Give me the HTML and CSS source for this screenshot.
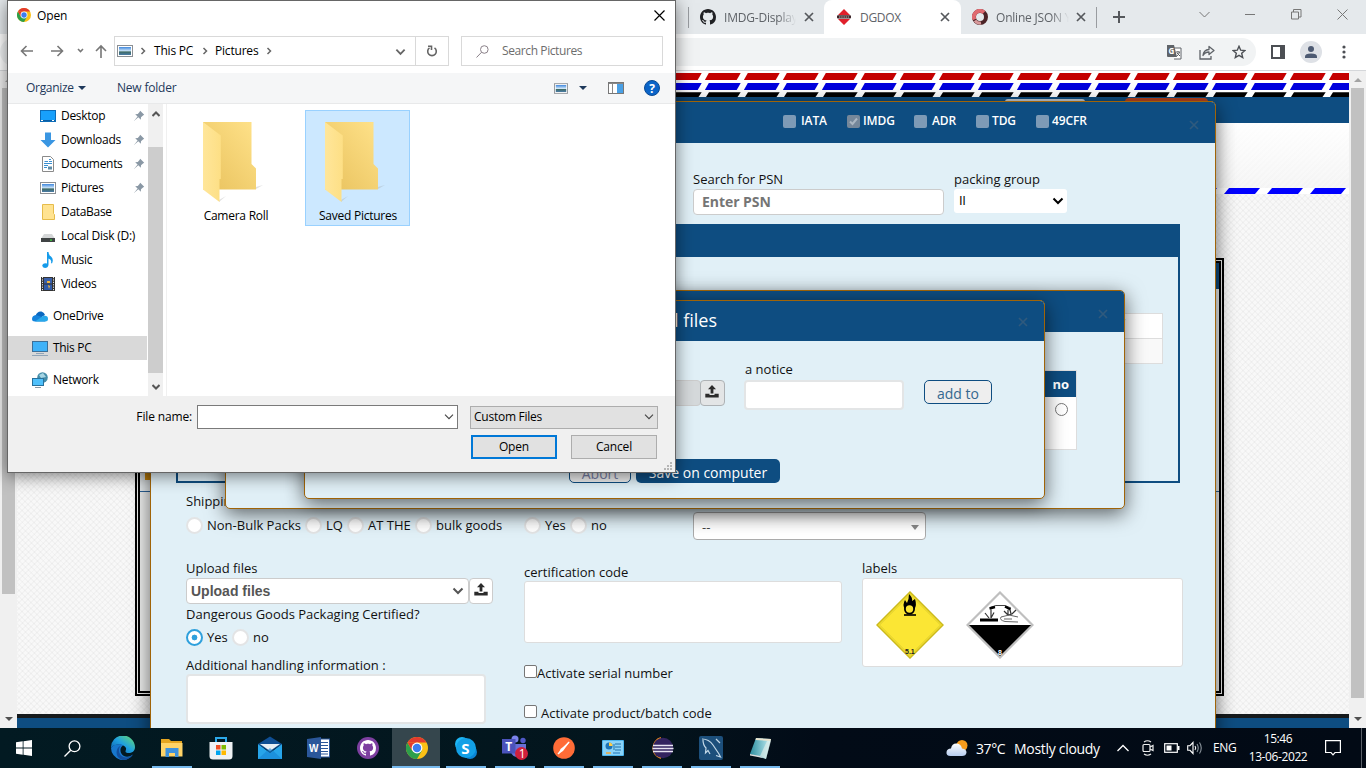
FILE: index.html
```html
<!DOCTYPE html>
<html lang="en">
<head>
<meta charset="utf-8">
<title>DGDOX</title>
<link rel="stylesheet" href="styles.css">
</head>
<body>
<svg class="defs" width="0" height="0">
  <defs>
    <linearGradient id="fback" x1="0" x2="1" y1="1" y2="0"><stop offset="0" stop-color="#e8c15c"/><stop offset="1" stop-color="#ffe28a"/></linearGradient>
    <linearGradient id="ffront" x1="0" x2="1"><stop offset="0" stop-color="#ffe69a"/><stop offset="1" stop-color="#fddf85"/></linearGradient>
    <linearGradient id="edgeg" x1="0" x2="1" y1="1" y2="0"><stop offset="0" stop-color="#0c59a4"/><stop offset=".5" stop-color="#1e9fe0"/><stop offset="1" stop-color="#6ae06a"/></linearGradient>
    <linearGradient id="sky" x1="0" x2="0" y1="0" y2="1"><stop offset="0" stop-color="#3f87dd"/><stop offset=".5" stop-color="#cfe6f8"/><stop offset=".6" stop-color="#3e6a62"/><stop offset="1" stop-color="#4a7ca8"/></linearGradient>
    <linearGradient id="note" x1="0" x2="1"><stop offset="0" stop-color="#2c8d9f"/><stop offset="1" stop-color="#c4eff4"/></linearGradient>
    <linearGradient id="cloudg" x1="0" x2="0" y1="0" y2="1"><stop offset="0" stop-color="#fff"/><stop offset="1" stop-color="#b7cdf0"/></linearGradient>
    <symbol id="chrome" viewBox="0 0 24 24"><circle cx="12" cy="12" r="12" fill="#fbc116"/><path d="M1.6 6A12 12 0 0 1 22.4 6H12z" fill="#e33b2e"/><path d="M1.6 6A12 12 0 0 0 12 24L17.2 15 12 12 6.8 15z" fill="#2d9f4b"/><path d="M1.6 6 6.8 15 12 6z" fill="#e33b2e"/><circle cx="12" cy="12" r="5.9" fill="#fff"/><circle cx="12" cy="12" r="4.6" fill="#3c7df0"/></symbol>
    <symbol id="github" viewBox="0 0 16 16"><path d="M8 0C3.58 0 0 3.58 0 8c0 3.54 2.29 6.53 5.47 7.59.4.07.55-.17.55-.38 0-.19-.01-.82-.01-1.49-2.01.37-2.53-.49-2.69-.94-.09-.23-.48-.94-.82-1.13-.28-.15-.68-.52-.01-.53.63-.01 1.08.58 1.23.82.72 1.21 1.87.87 2.33.66.07-.52.28-.87.51-1.07-1.78-.2-3.64-.89-3.64-3.95 0-.87.31-1.59.82-2.15-.08-.2-.36-1.02.08-2.12 0 0 .67-.21 2.2.82.64-.18 1.32-.27 2-.27s1.36.09 2 .27c1.53-1.04 2.2-.82 2.2-.82.44 1.1.16 1.92.08 2.12.51.56.82 1.27.82 2.15 0 3.07-1.87 3.75-3.65 3.95.29.25.54.73.54 1.48 0 1.07-.01 1.93-.01 2.2 0 .21.15.46.55.38A8.01 8.01 0 0 0 16 8c0-4.42-3.58-8-8-8z"/></symbol>
    <symbol id="pic" viewBox="0 0 16 12"><rect x=".5" y=".5" width="15" height="11" fill="#fff" stroke="#8b8f94"/><rect x="2" y="2" width="12" height="8" fill="url(#sky)"/></symbol>
    <symbol id="pin" viewBox="0 0 12 12"><path d="M7.2.8 11.2 4.8 10 5.6 8 7.3 7.8 9.8 5.3 7.3 1 11 4.6 6.6 2.2 4.3 4.8 4 6.5 2z" fill="#8a98a5"/></symbol>
    <symbol id="upload" viewBox="0 0 14 13"><path d="M7 0 11 4.3H8.4V8.5H5.6V4.3H3zM.3 8.8H4.5V10H9.500V8.800H13.700V12.500H.3z" fill="#2b2b2b"/></symbol>
    <symbol id="folder" viewBox="0 0 62 84"><path d="M54 67 61 65 54 69zM17 80 24 76 17 82z" fill="#9a9a9a" opacity=".3"/><path d="M1 2H49.500V44L54 48.500V69.500H1z" fill="url(#fback)"/><path d="M1 2 18.800 15.500V59H17.500V82L1 69.500z" fill="url(#ffront)"/></symbol>
    <symbol id="chev" viewBox="0 0 12 8"><path d="M1.500 1.500 6 6 10.500 1.500" fill="none" stroke="currentColor" stroke-width="2"/></symbol>
    <symbol id="cross" viewBox="0 0 10 10"><path d="M1 1 9 9M9 1 1 9" stroke="currentColor" stroke-width="1.700"/></symbol>
  </defs>
</svg>

<div class="browser">
  <div class="tabs">
    <div class="tab tab-left"><svg width="16" height="16" fill="#202124"><use href="#github"/></svg><span class="tab-text fade">IMDG-Display</span><svg class="tab-x" width="10" height="10"><use href="#cross"/></svg></div>
    <div class="tab tab-on"><svg width="14" height="16" viewBox="0 0 14 16"><path d="M7 0 13 6H1zM1 10H13L7 16z" fill="#e0202b"/><rect y="6.200" width="14" height="3.400" rx="1" fill="#3a2226"/><path d="M2 8H12" stroke="#c9b5b5" stroke-dasharray="1.500 .7"/></svg><span class="tab-text">DGDOX</span><svg class="tab-x" width="10" height="10"><use href="#cross"/></svg></div>
    <div class="tab tab-right"><svg width="16" height="16" viewBox="0 0 16 16" fill="none"><circle cx="8" cy="8" r="6" stroke="#4c2427" stroke-width="4"/><path d="M2.500 10.500A6 6 0 0 1 12 3.500" stroke="#e06a70" stroke-width="4"/><path d="M3 11.500A6 6 0 0 0 9 14" stroke="#d99a9c" stroke-width="3"/></svg><span class="tab-text fade">Online JSON Y</span><svg class="tab-x" width="10" height="10"><use href="#cross"/></svg></div>
    <svg class="plus" width="12" height="12" viewBox="0 0 12 12"><path d="M6 0V12M0 6H12" stroke="#55585c" stroke-width="2"/></svg>
    <div class="wincontrols">
      <svg width="11" height="11" viewBox="0 0 11 11" fill="none" stroke="#777"><path d="M.5 3 5.500 8 10.500 3"/></svg>
      <svg width="11" height="11" viewBox="0 0 11 11" stroke="#777"><path d="M0 5.500H10"/></svg>
      <svg width="11" height="11" viewBox="0 0 11 11" fill="none" stroke="#777"><path d="M.5 3H7.500V10H.5zM2.500 3V.5H10V8H8"/></svg>
      <svg width="11" height="11" viewBox="0 0 11 11" stroke="#777"><path d="M.5.5 10.500 10.500M10.500.5.5 10.500"/></svg>
    </div>
  </div>
  <div class="toolbar">
    <div class="omnibox">
      <svg width="15" height="15" viewBox="0 0 15 15"><path d="M6 3H14V14H7" fill="#fff" stroke="#5f6368"/><path d="M0 0H7L10 12H1Q0 12 0 11z" fill="#5f6368"/><text x="1.500" y="9" class="gletter">G</text><path d="M9 7H13M11 6V7M12.500 7Q12 10 9.800 11M10 8 13 11" stroke="#5f6368" fill="none"/></svg>
      <svg width="16" height="15" viewBox="0 0 16 15" fill="none" stroke="#5f6368" stroke-width="1.300"><path d="M1 5V14H12V11"/><path d="M4 10.500Q4.500 5 10 4.500V1.500L15 5.500 10 9.500V7Q6 7 4 10.500z" stroke-linejoin="round"/></svg>
      <svg width="14" height="14" viewBox="0 0 14 14" fill="none" stroke="#4c4f54" stroke-width="1.400"><path d="M7 1.300 8.700 5.200 12.900 5.600 9.700 8.300 10.700 12.500 7 10.300 3.300 12.500 4.300 8.300 1.100 5.600 5.300 5.200z"/></svg>
    </div>
    <svg class="side" width="14" height="14" viewBox="0 0 14 14"><path d="M1 1H13V13H1z" fill="#fff" stroke="#4c4f54" stroke-width="2"/><path d="M9 0H14V14H9z" fill="#4c4f54"/></svg>
    <svg class="avatar" width="22" height="22" viewBox="0 0 22 22"><circle cx="11" cy="11" r="11" fill="#dee1e6"/><circle cx="11" cy="8" r="3" fill="#4d5a72"/><path d="M5 17V15.500Q5 12.500 11 12.500T17 15.500V17z" fill="#4d5a72"/></svg>
    <svg class="dots" width="4" height="14" fill="#4c4f54"><circle cx="2" cy="2" r="1.600"/><circle cx="2" cy="7" r="1.600"/><circle cx="2" cy="12" r="1.600"/></svg>
  </div>
  <div class="viewport">
    <div class="scroll scroll-l"><i class="up"></i><div class="thumb"></div><i class="down"></i></div>
    <div class="page">
      <svg class="stripes" width="1332" height="26">
        <defs><pattern id="st" width="39" height="26" patternUnits="userSpaceOnUse" x="25"><rect width="39" height="26" fill="#fff"/><path d="M-.2 9 3.800 2H35.700L31.700 9z" fill="#c40000"/><path d="M-.2 19 3.800 12H35.700L31.700 19z" fill="#00d"/><path d="M1 26 4 21.300H35.700L32.500 26z" fill="#000"/></pattern></defs>
        <rect width="1332" height="26" fill="url(#st)"/>
      </svg>
      <div class="navbar"><i class="nav-light"></i><i class="nav-red"></i></div>
      <div class="banner"></div>
      <svg class="stripes" width="1332" height="6">
        <defs><pattern id="sb" width="43" height="6" patternUnits="userSpaceOnUse" x="3"><rect width="43" height="6" fill="#fff"/><path d="M0 6 5 0H36L31 6z" fill="#00f"/></pattern></defs>
        <rect width="1332" height="6" fill="url(#sb)"/>
      </svg>
      <div class="canvas"><div class="frame"><div class="frame-head"></div><div class="frame-body"><i class="frame-tag"></i></div></div></div>
      <div class="foot"></div>
    </div>
    <div class="scroll scroll-r"><i class="up"></i><div class="thumb"></div><i class="down dark"></i></div>

    <div class="modal m1">
      <div class="mhead checks">
        <span class="ck w1"><i></i>IATA</span><span class="ck w2 tight"><i class="on"><svg width="13" height="13" viewBox="0 0 13 13"><path d="M3 6.500 5.500 9 10 3.500" fill="none" stroke="#aab6c2" stroke-width="2"/></svg></i>IMDG</span><span class="ck w3"><i></i>ADR</span><span class="ck w4 tight"><i></i>TDG</span><span class="ck tight"><i></i>49CFR</span>
        <svg class="mx" width="10" height="10"><use href="#cross"/></svg>
      </div>
      <div class="mbody">
        <div class="psn-row">
          <div><div class="lbl upl1">Search for PSN</div><div class="psn">Enter PSN</div></div>
          <div><div class="lbl upl1">packing group</div><div class="pg"><span>II</span><svg width="12" height="8"><use href="#chev"/></svg></div></div>
        </div>
        <div class="box"><div class="box-head"></div><div class="grid-table"><div class="gt-row">y</div><div class="gt-row alt"></div></div></div>
        <div class="ship">
          <div><div class="lbl upl1">Shipping</div><div class="radios"><span class="r ra"><i></i>Non-Bulk Packs</span><span class="r rb"><i></i>LQ</span><span class="r rc"><i></i>AT THE</span><span class="r"><i></i>bulk goods</span></div></div>
          <div class="radios"><span class="r rd"><i></i>Yes</span><span class="r"><i></i>no</span></div>
          <div class="dd"><span>--</span><i></i></div>
        </div>
        <div class="cols">
          <div>
            <div class="lbl">Upload files</div>
            <div class="upl"><div class="usel"><b>Upload files</b><svg width="12" height="8"><use href="#chev"/></svg></div><div class="ubtn"><svg width="14" height="13"><use href="#upload"/></svg></div></div>
            <div class="lbl">Dangerous Goods Packaging Certified?</div>
            <div class="radios"><span class="r rd"><i class="sel"></i>Yes</span><span class="r"><i></i>no</span></div>
            <div class="lbl add">Additional handling information :</div>
            <div class="ta1"></div>
          </div>
          <div class="c2">
            <div class="lbl">certification code</div>
            <div class="ta2"></div>
            <div class="cb"><i></i>Activate serial number</div>
            <div class="cb sp"><i></i>Activate product/batch code</div>
          </div>
          <div>
            <div class="lbl">labels</div>
            <div class="labels">
              <svg width="68" height="68" viewBox="0 0 68 68"><path d="M34 1 67 34 34 67 1 34z" fill="#fbe634" stroke="#cbb91c" stroke-width="1.500"/><path d="M34 3.500 64.500 34 34 64.500 3.500 34z" fill="none" stroke="#d3c32a" stroke-width=".7"/><path d="M33 3Q37 7 36 10L39 8Q41 14 38.500 18H29Q26 14 29 9L31 12Q33 8 33 3z" fill="#000"/><circle cx="33.500" cy="18" r="4.600" fill="#fbe634" stroke="#000" stroke-width="1.800"/><path d="M28 24H40" stroke="#000" stroke-width="1.600"/><text x="29" y="63" class="cls">5.1</text></svg>
              <svg width="68" height="68" viewBox="0 0 68 68"><path d="M34 1.500 66.500 34 34 66.500 1.500 34z" fill="#fff"/><path d="M2 34H66L34 66z" fill="#000"/><path d="M34 1.500 66.500 34 34 66.500 1.500 34z" fill="none" stroke="#bfbfbf" stroke-width="2.200"/><path d="M14 27.500H32V30.500H14z" fill="#000"/><path d="M24 16.500 30 14.500 39 14.500 45 17" fill="none" stroke="#444" stroke-width="1"/><path d="M23.500 17.500 29 16M39 15.500 44.500 18.500" stroke="#000" stroke-width="2.400"/><path d="M25 18.500V27M19 22 23 27M28 21.500 25 27M44 18.500 45 23M38 20 42 24 46 23 50 19M42 19V24" fill="none" stroke="#333" stroke-width="1.200"/><path d="M52 26 43 24 35 26Q33 29 39 30.500L52 31M38 28 46 28" fill="none" stroke="#666" stroke-width="1"/><text x="32" y="64" class="cls w">8</text></svg>
            </div>
          </div>
        </div>
      </div>
    </div>

    <div class="modal m2">
      <div class="mhead"><svg class="mx" width="10" height="10"><use href="#cross"/></svg></div>
      <div class="mbody m2b"><div class="yn"><div class="yn-h">no</div><div class="yn-c"><i></i></div></div></div>
    </div>

    <div class="modal m3">
      <div class="mhead title">Upload files<svg class="mx" width="10" height="10"><use href="#cross"/></svg></div>
      <div class="mbody m3b">
        <div class="frow">
          <div class="fgroup"><div class="fdis"></div><div class="fbtn"><svg width="14" height="13"><use href="#upload"/></svg></div></div>
          <div class="notice"><div class="lbl">a notice</div><div class="fin"></div></div>
          <div class="addto">add to</div>
        </div>
        <div class="fbtns"><div class="abort">Abort</div><div class="save">Save on computer</div></div>
      </div>
    </div>
  </div>
</div>

<div class="dialog">
  <div class="d-title"><svg width="14" height="14"><use href="#chrome"/></svg><span>Open</span><svg class="d-x" width="11" height="11" viewBox="0 0 11 11" stroke="#000"><path d="M.5.5 10.500 10.500M10.500.5.5 10.500" stroke-width="1.200"/></svg></div>
  <div class="d-nav">
    <svg class="arrows" width="88" height="14" viewBox="0 0 88 14" fill="none" stroke="#777" stroke-width="1.600"><path d="M13 7H1.500M6.500 2 1.500 7 6.500 12M31 7H42.500M37.500 2 42.500 7 37.500 12"/><path d="M58 5 60.500 7.500 63 5"/><path d="M81 14V2M76 7 81 2 86 7"/></svg>
    <div class="addr"><svg width="16" height="12"><use href="#pic"/></svg><svg class="sep" width="6" height="8" viewBox="0 0 6 8"><path d="M1.500 1 4.500 4 1.500 7" fill="none" stroke="#666" stroke-width="1.500"/></svg><span class="a1">This PC</span><svg class="sep" width="6" height="8" viewBox="0 0 6 8"><path d="M1.500 1 4.500 4 1.500 7" fill="none" stroke="#666" stroke-width="1.500"/></svg><span class="a2">Pictures</span><svg class="sep" width="6" height="8" viewBox="0 0 6 8"><path d="M1.500 1 4.500 4 1.500 7" fill="none" stroke="#666" stroke-width="1.500"/></svg><svg class="a-dd" width="11" height="8"><use href="#chev"/></svg></div>
    <div class="refresh"><svg width="12" height="12" viewBox="0 0 12 12" fill="none" stroke="#666" stroke-width="1.600"><path d="M8.500 2.800A4.300 4.300 0 1 1 3.500 2.800"/><path d="M2 1.200H5.500V5"/></svg></div>
    <div class="search"><svg width="13" height="13" viewBox="0 0 13 13" fill="none" stroke="#8a8088"><circle cx="8.300" cy="4.500" r="3.800"/><path d="M5.500 7.300.5 12.500"/></svg><span>Search Pictures</span></div>
  </div>
  <div class="d-tools"><span class="org">Organize</span><i class="tri"></i><span class="nf">New folder</span>
    <svg class="t1" width="14" height="11"><use href="#pic"/></svg><i class="tri"></i>
    <svg class="t2" width="16" height="12" viewBox="0 0 16 12"><rect x=".5" y=".5" width="15" height="11" fill="#fff" stroke="#777"/><path d="M1 1.500H15M4.500 2V11" stroke="#888"/><rect x="9" y="2" width="6" height="9" fill="#49a0e6"/></svg>
    <svg class="t3" width="16" height="16" viewBox="0 0 16 16"><circle cx="8" cy="8" r="7.500" fill="#0b64c8" stroke="#0a4a94"/><text x="5.200" y="12.500" class="q">?</text></svg>
  </div>
  <div class="d-main">
    <div class="side-list">
      <div class="it"><svg width="16" height="16" viewBox="0 0 16 16"><rect x=".5" y="2.500" width="15" height="11" fill="#18a0fb" stroke="#0c6cb8"/><path d="M1 12.500H15" stroke="#0c5ea3" /><path d="M1 12.500H3M12 12.500H14" stroke="#fff"/></svg><span>Desktop</span><svg class="pin" width="12" height="12"><use href="#pin"/></svg></div>
      <div class="it"><svg width="16" height="16" viewBox="0 0 16 16"><path d="M5 .5H11V8H15.500L8 15.500.5 8H5z" fill="#3a96e2"/></svg><span>Downloads</span><svg class="pin" width="12" height="12"><use href="#pin"/></svg></div>
      <div class="it"><svg width="16" height="16" viewBox="0 0 16 16"><path d="M2.500.5H10.500L13.500 3.500V15.500H2.500z" fill="#fff" stroke="#8a8a8a"/><path d="M4.500 5.500H8M9 3.500H11M9 5.500H12M4 7.500H12M4 9.500H8M4 11.500H7" stroke="#3b8fd0"/><path d="M8 10.500H12V13.500H8z" fill="#5d8ba6"/></svg><span>Documents</span><svg class="pin" width="12" height="12"><use href="#pin"/></svg></div>
      <div class="it"><svg width="16" height="12"><use href="#pic"/></svg><span>Pictures</span><svg class="pin" width="12" height="12"><use href="#pin"/></svg></div>
      <div class="it"><svg width="16" height="16" viewBox="0 0 16 16"><path d="M2.500.5H13.500V9.500L14.500 10.500V15.500H2.500z" fill="#ffe391" stroke="#e6bc4b"/></svg><span>DataBase</span></div>
      <div class="it"><svg width="16" height="16" viewBox="0 0 16 16"><path d="M4 6H12L14.500 10H1.500z" fill="#d5d7d8"/><rect x="1" y="10" width="14" height="4" fill="#3f4344"/><rect x="10" y="11.500" width="2" height="1.200" fill="#3fe23f"/></svg><span class="nar">Local Disk (D:)</span></div>
      <div class="it"><svg width="16" height="16" viewBox="0 0 16 16"><path d="M7 0H8.500Q8.500 3 11 4.500 14 7 12 11.500L11 11Q12 7.500 8.500 6.500V13Q8 16 5 16 2 15.500 2.300 13 3.500 10.500 7 11.500z" fill="#159bea"/></svg><span>Music</span></div>
      <div class="it"><svg width="16" height="16" viewBox="0 0 16 16"><rect x="1" y="1" width="14" height="14" fill="#333"/><path d="M2.500 1V15M13.500 1V15" stroke="#e8e8e8" stroke-dasharray="1.200 1.200"/><rect x="4" y="2" width="8" height="5.500" fill="#3a5fa8"/><rect x="4" y="8.500" width="8" height="5.500" fill="#315ba8"/><path d="M7 5H10V7H7zM8 9 10 10 9 13z" fill="#f2b63c"/></svg><span>Videos</span></div>
      <div class="it top"><svg width="16" height="16" viewBox="0 0 16 16"><path d="M3.500 8Q5 3 9.500 3.500 12.500 4.500 13 7L8 10z" fill="#0a68c0"/><path d="M0 11Q0 7.500 4 7L10 9 15 12 13 13.500H3Q0 13.500 0 11z" fill="#1583dc"/><path d="M3 13.500 11 8Q16 7 16 11 16 13.500 13 13.500z" fill="#28a8ea"/></svg><span>OneDrive</span></div>
      <div class="it top act"><svg width="16" height="16" viewBox="0 0 16 16"><rect x=".5" y="1.500" width="15" height="10" fill="#3fb2f8" stroke="#3d6f97"/><path d="M4 13.500H12" stroke="#91a5b8"/><path d="M0 15.500H16" stroke="#91a5b8"/></svg><span>This PC</span></div>
      <div class="it top"><svg width="16" height="16" viewBox="0 0 16 16"><circle cx="10.500" cy="5.500" r="5.300" fill="#458da9"/><path d="M7 3 11 1 14 5 9 6z" fill="#a6d5e4"/><rect x=".5" y="6.500" width="11" height="7" fill="#4fc0fb" stroke="#28719c"/><path d="M3 15.500H9" stroke="#8899a5"/></svg><span>Network</span></div>
    </div>
    <div class="d-scroll"><svg width="8" height="6"><path d="M.5 5 4 1.500 7.500 5" fill="none" stroke="#555" stroke-width="2"/></svg><div class="d-thumb"></div><svg width="8" height="6"><path d="M.5 1 4 4.500 7.500 1" fill="none" stroke="#555" stroke-width="2"/></svg></div>
    <div class="files">
      <div class="file"><svg width="62" height="84"><use href="#folder"/></svg><span>Camera Roll</span></div>
      <div class="file picked"><svg width="62" height="84"><use href="#folder"/></svg><span>Saved Pictures</span></div>
    </div>
  </div>
  <div class="d-foot">
    <div class="f1"><span>File name:</span><div class="fname"><svg width="10" height="6" viewBox="0 0 10 6"><path d="M1 .7 5 4.700 9 .7" fill="none" stroke="#444" stroke-width="1.100"/></svg></div><div class="ftype"><span>Custom Files</span><svg width="10" height="6" viewBox="0 0 10 6"><path d="M1 .7 5 4.700 9 .7" fill="none" stroke="#444" stroke-width="1.100"/></svg></div></div>
    <div class="f2"><div class="btn pri">Open</div><div class="btn">Cancel</div></div>
    <svg class="grip" width="8" height="8" fill="#b5b5b5"><path d="M6 0H8V2H6zM3 3H5V5H3zM6 3H8V5H6zM0 6H2V8H0zM3 6H5V8H3zM6 6H8V8H6z"/></svg>
  </div>
</div>

<div class="taskbar">
  <div class="tb st"><svg width="16" height="16" viewBox="0 0 16 16" fill="#fff"><path d="M0 2.200 6.700 1.300V7.600H0zM7.500 1.200 16 0V7.600H7.500zM0 8.400H6.700V14.700L0 13.800zM7.500 8.400H16V16L7.500 14.800z"/></svg></div>
  <div class="tb se"><svg width="17" height="17" viewBox="0 0 17 17" fill="none" stroke="#fff" stroke-width="1.300"><circle cx="10.500" cy="6.300" r="5.400"/><path d="M6.700 10.200.5 16.500"/></svg></div>
  <div class="tb"><svg width="24" height="24" viewBox="0 0 24 24"><path d="M0 12A12 12 0 0 1 24 11C24 16 20 17.500 16 17 13 16 15.500 14.500 15 12 13 8 4 7 0 12z" fill="url(#edgeg)"/><path d="M0 12C3 7 11 8 12 9.500 8 12 9 18 13 20Q17 22 22 18.500A12 12 0 0 1 0 12z" fill="#1777cc"/><path d="M10 9.500C6 13 8 21 15 21.500Q19 21.500 22 18.500A12 12 0 0 1 12 24C5 23 3 13 10 9.500z" fill="#124f9e"/></svg></div>
  <div class="tb ul"><svg width="22" height="20" viewBox="0 0 22 20"><path d="M0 1H8L10 3H21V18H0z" fill="#e5a520"/><path d="M0 5H21.500V18.500H0z" fill="#ffd367"/><path d="M4.500 19V10H17.500V19H14V15H8V19z" fill="#3e92dd"/></svg></div>
  <div class="tb"><svg width="24" height="24" viewBox="0 0 24 24"><path d="M7 7V2H17V7" fill="none" stroke="#2ca9ea" stroke-width="2"/><path d="M.5 6H23.500V20Q23.500 23.500 20 23.500H4Q.5 23.500.5 20z" fill="#eef1f4"/><path d="M7 9H11.500V13.500H7z" fill="#f04e23"/><path d="M12.500 9H17V13.500H12.500z" fill="#7fba00"/><path d="M7 14.500H11.500V19H7z" fill="#00a4ef"/><path d="M12.500 14.500H17V19H12.500z" fill="#ffb900"/></svg></div>
  <div class="tb"><svg width="24" height="24" viewBox="0 0 24 24"><path d="M0 8 12 .5 24 8 12 16z" fill="#0f4e93"/><path d="M0 8V23H24V8L12 17z" fill="#27a5ea"/><path d="M2 8H22L12 15z" fill="#e8eff5"/><path d="M0 23 12 12 24 23z" fill="#1683d4" opacity=".6"/></svg></div>
  <div class="tb"><svg width="23" height="22" viewBox="0 0 23 22"><rect x="12" y="2" width="10.500" height="18" fill="#fff" stroke="#2b579a"/><path d="M14 5.500H21M14 8.500H21M14 11.500H21M14 14.500H21M14 17H21" stroke="#2b579a"/><path d="M0 2 14 0V22L0 20z" fill="#2b579a"/><text x="2" y="15" class="wd">W</text></svg></div>
  <div class="tb"><svg width="22" height="22" viewBox="0 0 22 22"><circle cx="11" cy="11" r="11" fill="#7d3fa0"/><g fill="#fff"><svg x="3" y="3" width="16" height="16"><use href="#github"/></svg></g></svg></div>
  <div class="tb cur"><svg width="22" height="22"><use href="#chrome"/></svg></div>
  <div class="tb ul"><svg width="22" height="22" viewBox="0 0 22 22"><circle cx="7" cy="7" r="7" fill="#1db6f5"/><circle cx="15" cy="15" r="7" fill="#0a84d4"/><circle cx="11" cy="11" r="10" fill="#12a0e6"/><text x="6.300" y="16.500" class="sk">S</text></svg></div>
  <div class="tb ul"><svg width="26" height="26" viewBox="0 0 26 26"><circle cx="13" cy="4" r="3.500" fill="#7b83eb"/><circle cx="21" cy="5.500" r="2.700" fill="#5059c9"/><path d="M9 9H24V17Q22 22 16 22 10 22 9 17z" fill="#6870d6"/><rect y="4" width="13.500" height="14.500" fill="#4b53bc"/><text x="3.200" y="15.500" class="tm">T</text><circle cx="19.500" cy="18.500" r="6.500" fill="#d0203c"/><text x="16.800" y="23" class="tn">1</text></svg></div>
  <div class="tb ul"><svg width="22" height="22" viewBox="0 0 22 22"><circle cx="11" cy="11" r="10.800" fill="#ff6c37"/><path d="M17 4.500 7.500 12 5.500 17 10 14z" fill="#fff"/><path d="M5 17 16 5" stroke="#fff" stroke-width="1.300"/></svg></div>
  <div class="tb ul"><svg width="22" height="17" viewBox="0 0 22 17"><rect width="22" height="16" rx="1" fill="#4db6ee"/><rect x="1" y="1" width="20" height="14" fill="#8ad3f8"/><circle cx="7" cy="6" r="3.500" fill="#1e73b5"/><path d="M7 6V2.500A3.500 3.500 0 0 1 10.500 6z" fill="#ffcc44"/><path d="M13 4H19M13 7H19M13 10H19M12 4V10" stroke="#2071a8"/><path d="M4 13H9" stroke="#f2a93b" stroke-width="1.500"/><path d="M11 13H18" stroke="#1e73b5"/></svg></div>
  <div class="tb ul"><svg width="24" height="22" viewBox="0 0 24 22"><path d="M11 1A11 10.500 0 0 0 11 21" fill="none" stroke="#f28c1e" stroke-width="2"/><circle cx="13" cy="11" r="10.200" fill="#33235f"/><path d="M3 8.500H23M2.500 11.500H23.500M3 14.500H23" stroke="#e8e4f2" stroke-width="1.500"/></svg></div>
  <div class="tb ul"><svg width="24" height="24" viewBox="0 0 24 24"><rect width="24" height="24" rx="2" fill="#1c4f7b"/><path d="M3 3Q10 3 14 9T20 18L21.500 21 17 19.500M4 4Q4 9 7 12L6.500 17 9 14.500 11 18M17 3 21 7" fill="none" stroke="#c3d9e8" stroke-width="1.200"/></svg></div>
  <div class="tb ul"><svg width="24" height="24" viewBox="0 0 24 24"><path d="M8 2 23 3 18 23 2 18z" fill="url(#note)"/><path d="M8 2 23 3 22.500 5 7.500 4z" fill="#e9e4cf"/><path d="M19 5H23L18 23 12 20z" fill="#f1f4ec" opacity=".55"/><path d="M2 18 12 20 15 22 2 19.500z" fill="#ddd"/></svg></div>
  <div class="tray">
    <svg width="22" height="18" viewBox="0 0 22 18"><circle cx="16" cy="6.500" r="5.500" fill="#f89c1c"/><path d="M4.500 17Q0 17 .5 13 1 9.500 5 9.500 6 4 11 4.500 15 5 16 9.500 20.500 10 20.500 13.500 20 17 16 17z" fill="url(#cloudg)"/></svg>
    <span class="temp">37°C</span><span class="wth">Mostly cloudy</span>
    <svg class="y1" width="12" height="8" viewBox="0 0 12 8" fill="none" stroke="#fff" stroke-width="1.300"><path d="M.5 7 6 1.500 11.500 7"/></svg>
    <svg class="y2" width="12" height="16" viewBox="0 0 12 16" fill="none" stroke="#eee" stroke-width="1.200"><rect x="1" y="4.500" width="7" height="7" rx="1"/><path d="M8 7 11 5.500V10.500L8 9M2 2Q5.500-.5 9 2M2 14Q5.500 16.500 9 14"/></svg>
    <svg class="y3" width="16" height="10" viewBox="0 0 16 10"><rect x=".7" y=".7" width="12.600" height="8.600" fill="none" stroke="#fff" stroke-width="1.200"/><path d="M2.500 2.500H7.500V7.500H2.500zM14 3H15.500V7H14z" fill="#fff"/></svg>
    <svg class="y4" width="16" height="14" viewBox="0 0 16 14" fill="none" stroke="#fff" stroke-width="1.100"><path d="M.7 4.700H3L6 1.500V12.500L3 9.300H.7zM8 5Q9.500 7 8 9"/><path d="M10 3Q12.500 7 10 11M12.500 1.500Q16 7 12.500 12.500" stroke="#8b949c"/></svg>
    <span class="eng">ENG</span>
    <div class="clock"><span>15:46</span><span class="dt">13-06-2022</span></div>
    <svg class="y5" width="16" height="16" viewBox="0 0 16 16" fill="none" stroke="#fff" stroke-width="1.200"><path d="M.6.600H15.400V12.500H10L8 14.800 6 12.500H.6z"/></svg>
    <i class="peek"></i>
  </div>
</div>
</body>
</html>
```

FILE: styles.css
```css
* { box-sizing: border-box; }
body { margin: 0; width: 1366px; height: 768px; overflow: hidden; position: relative; font-family: "Open Sans", "Noto Sans", sans-serif; font-size: 13px; color: #111; background: #fff; }
svg { display: block; flex: none; }
.defs { position: absolute; }
span, div { white-space: nowrap; }

/* browser chrome */
.browser { height: 728px; display: flex; flex-direction: column; }
.tabs { height: 34px; background: #e5e9ec; display: flex; align-items: center; padding-left: 688px; flex: none; color: #5f6368; font-size: 12px; }
.tab { display: flex; align-items: center; height: 34px; }
.tab-left { width: 136px; padding-left: 11px; border-left: 1px solid #999ca0; border-image: linear-gradient(#e5e9ec 22%, #999ca0 22%, #999ca0 80%, #e5e9ec 80%) 1; }
.tab-left .tab-text { margin-left: 8px; width: 72px; }
.tab-on { width: 137px; background: #fff; border-radius: 8px 8px 0 0; padding-left: 13px; }
.tab-on .tab-text { margin-left: 9px; width: 73px; letter-spacing: -.3px; }
.tab-right { width: 136px; padding-left: 11px; border-right: 1px solid #999ca0; border-image: linear-gradient(#e5e9ec 22%, #999ca0 22%, #999ca0 80%, #e5e9ec 80%) 1; }
.tab-right .tab-text { margin-left: 8px; width: 73px; }
.tab-text { overflow: hidden; letter-spacing: -.2px; }
.fade { -webkit-mask-image: linear-gradient(90deg, #000 75%, transparent); mask-image: linear-gradient(90deg, #000 75%, transparent); }
.tab-x { margin-left: 7px; color: #55585c; }
.tab-left .tab-x { margin-left: 8px; }
.plus { margin-left: 16px; }
.wincontrols { margin-left: auto; display: flex; gap: 35px; padding-right: 18px; margin-top: -6px; }
.toolbar { height: 37px; flex: none; background: #fff; border-bottom: 1px solid #d5d7da; display: flex; align-items: center; padding-right: 20px; }
.omnibox { width: 1258px; height: 28px; border-radius: 14px; background: #f1f3f4; display: flex; justify-content: flex-end; align-items: center; gap: 17px; padding-right: 10px; }
.gletter { font: bold 8px "Open Sans", sans-serif; fill: #fff; }
.side { margin-left: 15px; }
.avatar { margin-left: 15px; }
.dots { margin-left: 20px; }

/* page behind the modals */
.viewport { flex: 1; position: relative; overflow: hidden; display: flex; }
.scroll { width: 17px; background: #f0f0f0; display: flex; flex-direction: column; align-items: center; height: 657px; flex: none; }
.scroll .up, .scroll .down { width: 0; height: 0; border: 4px solid transparent; }
.scroll .up { border-bottom-color: #a3a3a3; border-top: 0; margin: 7px 0 6px; }
.scroll .down { border-top-color: #505050; border-bottom: 0; margin: auto 0 7px; }
.thumb { width: 13px; background: #c1c1c1; height: 506px; }
.scroll-r .thumb { height: 610px; }
.page { width: 1332px; display: flex; flex-direction: column; }
.navbar { height: 26px; background: #0e4d81; display: flex; align-items: flex-start; padding-left: 988px; }
.nav-light { width: 80px; height: 10px; background: #c5ccd2; border-radius: 3px; margin: 2px 40px 0 0; }
.nav-red { width: 83px; height: 10px; background: #b8431d; border-radius: 4px; margin-top: 1px; }
.banner { height: 65px; background: linear-gradient(rgba(255,255,255,.95), rgba(245,245,245,.85)), repeating-linear-gradient(135deg, #eee 0 2px, #fff 2px 4px); }
.canvas { flex: 1; background-color: #f8f8f8; background-image: repeating-linear-gradient(45deg, rgba(0,0,0,.025) 0 1.400px, transparent 1.400px 4.200px), repeating-linear-gradient(135deg, rgba(0,0,0,.025) 0 1.400px, transparent 1.400px 4.200px); padding: 64px 0 0 118px; }
.frame { width: 1089px; height: 438px; border: 5px double #000; background: #eff0ef; }
.frame-head { height: 26px; background: #0e4d81; }
.frame-body { height: 203px; border-bottom: 1px solid #2c659b; background: #edf2f4; padding: 183px 0 0 5px; }
.frame-tag { display: block; width: 20px; height: 8px; background: #dd920c; }
.foot { height: 14px; border-top: 4px solid #161a1c; background: #0e4d81; }

/* modals */
.modal { position: absolute; border: 1px solid #a06408; border-radius: 5px; background: #e1f0f7; box-shadow: 0 5px 20px rgba(0,0,0,.6); overflow: hidden; }
.m1 { left: 150px; top: 30px; width: 1066px; height: 720px; }
.m2 { left: 225px; top: 219px; width: 900px; height: 219px; }
.m3 { left: 304px; top: 229px; width: 741px; height: 199px; }
.mhead { height: 41px; background: #0e4d81; display: flex; align-items: center; color: #fff; }
.m3 .mhead { height: 40px; }
.mx { margin-left: auto; color: #2f5a7e; margin-right: 16px; margin-top: 4px; }
.checks { padding-left: 632px; font-size: 12px; font-weight: 600; padding-bottom: 2px; }
.checks .mx { margin-top: 6px; }
.ck { display: flex; align-items: center; gap: 5px; letter-spacing: -.1px; line-height: 16px; height: 18px; padding-bottom: 2px; }
.ck.tight { gap: 3px; }
.ck i { width: 13px; height: 13px; border-radius: 2px; background: #7d9ab6; margin-top: 2px; }
.ck i.on { background: #75879a; }
.w1 { width: 64px; } .w2 { width: 67px; } .w3 { width: 62px; } .w4 { width: 60px; }
.lbl { height: 18px; line-height: 18px; }
.upl1 { line-height: 16px; }
.psn-row { display: flex; gap: 10px; padding: 28px 0 0 542px; }
.psn { width: 251px; height: 26px; border: 1px solid #ccc; border-radius: 4px; background: #fff; font-weight: 700; font-size: 14px; color: #757575; line-height: 24px; padding-left: 8px; letter-spacing: -.05px; }
.pg { width: 113px; height: 24px; border-radius: 3px; background: #fff; display: flex; align-items: center; justify-content: space-between; padding: 0 3px 0 5px; font-size: 13px; letter-spacing: -.5px; color: #000; }
.pg span { padding-bottom: 2px; }
.box { width: 1004px; height: 259px; border: 2px solid #0e4d81; margin: 9px 0 0 25px; }
.box-head { height: 31px; background: #0e4d81; }
.grid-table { width: 400px; margin: 56px 15px 0 auto; border: 1px solid #ddd; background: #fff; }
.gt-row { height: 24px; text-align: right; padding-right: 37px; font-size: 12px; font-weight: 700; line-height: 16px; }
.gt-row.alt { background: #f9f9f9; border-top: 1px solid #ddd; height: 25px; }
.ship { display: grid; grid-template-columns: 338px 169px 300px; align-items: end; padding: 10px 0 0 35px; }
.radios { display: flex; height: 29px; align-items: center; padding-bottom: 1px; }
.r { display: flex; align-items: center; gap: 4px; }
.r i { width: 17px; height: 17px; border: 2px solid #e3e4e5; border-radius: 50%; background: #fff; }
.r i.sel { border-color: #2fa0dc; background: radial-gradient(circle, #2fa0dc 2.600px, #fff 3.200px); }
.ra { width: 119px; } .rb { width: 42px; } .rc { width: 68px; } .rd { width: 46px; }
.dd { width: 233px; height: 28px; border: 1px solid #aaa; border-radius: 4px; background: #fff; display: flex; align-items: center; justify-content: space-between; padding: 2px 6px 0 8px; color: #444; }
.dd i { border: 4px solid transparent; border-top: 5px solid #888; border-bottom: 0; }
.cols { display: grid; grid-template-columns: 338px 338px 321px; padding: 19px 0 0 35px; }
.upl { display: flex; margin: 1px 0; height: 26px; }
.usel { width: 283px; border: 1px solid #ccc; border-radius: 4px; background: #fff; display: flex; align-items: center; justify-content: space-between; padding: 0 4px; font: 14px "Liberation Sans", sans-serif; color: #555; }
.ubtn { width: 24px; border: 1px solid #ccc; border-radius: 4px; background: #fff; padding: 4px 0 0 4px; }
.add { margin-top: 4px; }
.ta1 { width: 300px; height: 50px; border: 2px solid #e3e5e6; border-radius: 4px; background: #fff; }
.c2 { padding-top: 4px; }
.ta2 { width: 318px; height: 62px; border: 1px solid #ddd; border-radius: 3px; background: #fff; }
.cb { height: 18px; margin-top: 21px; display: flex; align-items: center; }
.cb i { width: 13px; height: 13px; border: 1px solid #767676; border-radius: 2px; background: #fff; margin-bottom: 3px; }
.cb.sp { margin-top: 22px; gap: 4px; }
.labels { margin-top: 1px; height: 89px; width: 321px; border: 1px solid #ddd; border-radius: 3px; background: #fff; display: flex; gap: 22px; padding: 12px 0 0 13px; }
.cls { font: bold 7px "Liberation Sans", sans-serif; fill: #222; }
.cls.w { fill: #fff; }

.m2b { padding: 38px 47px 0 0; display: flex; justify-content: flex-end; }
.yn { width: 80px; border: 1px solid #ddd; background: #fff; height: 80px; }
.yn-h { height: 26px; background: #0e4d81; color: #fff; font-weight: 700; text-align: right; padding-right: 7px; line-height: 26px; }
.yn-c { display: flex; justify-content: flex-end; padding: 6px 8px 0 0; }
.yn-c i { width: 13px; height: 13px; border: 1px solid #767676; border-radius: 50%; }
.title { font-size: 18px; padding-left: 313px; font-weight: 500; padding-bottom: 2px; letter-spacing: 0; }
.m3b { height: 157px; display: flex; flex-direction: column; }
.frow { display: flex; padding: 19px 0 0 295px; align-items: flex-start; }
.fgroup { display: flex; margin-top: 20px; height: 26px; }
.fdis { width: 101px; background: #d5d9db; border: 1px solid #ccc; border-radius: 4px; }
.fbtn { width: 25px; background: #e3e5e6; border: 1px solid #aeb2b5; border-radius: 4px; padding: 4px 0 0 4px; margin-left: -1px; }
.notice { margin-left: 20px; width: 179px; }
.fin { width: 160px; height: 30px; border: 2px solid #e3e5e6; border-radius: 4px; background: #fff; margin: 2px 0 0 -1px; }
.addto { width: 68px; height: 24px; border: 1px solid #0e4d81; border-radius: 5px; background: #eee; color: #35688f; font-size: 14px; text-align: center; line-height: 25px; margin-top: 20px; }
.fbtns { display: flex; gap: 5px; padding-left: 264px; margin-top: 49px; }
.abort, .save { height: 24px; border-radius: 5px; font-size: 14px; line-height: 28px; text-align: center; overflow: hidden; }
.abort { width: 62px; border: 1px solid #0e4d81; background: #eee; color: #777fa5; }
.save { width: 144px; background: #0e4d81; color: #fff; font-weight: 500; }

/* file dialog */
.dialog { position: absolute; left: 7px; top: 0; width: 669px; height: 473px; border: 1px solid #666; background: #fff; box-shadow: 0 3px 16px rgba(0,0,0,.5); display: flex; flex-direction: column; font-size: 12px; color: #000; letter-spacing: -.3px; }
.d-title { height: 35px; display: flex; align-items: flex-start; padding: 7px 10px 0; }
.d-title svg:first-child { margin-left: -1px; }
.d-title span { margin-left: 6px; line-height: 16px; letter-spacing: -.15px; }
.d-x { margin: 2px 0 0 auto; }
.d-nav { height: 30px; display: flex; align-items: center; padding-left: 12px; }
.arrows { margin-right: 6px; }
.addr { width: 301px; height: 30px; border: 1px solid #d9d9d9; border-right: 0; display: flex; align-items: center; padding-left: 2px; }
.addr span, .search span, .d-tools span { padding-bottom: 2px; }
.sep { margin-left: 7px; }
.a1 { margin-left: 8px; width: 41px; letter-spacing: -.2px; }
.a2 { margin-left: 7px; width: 44px; letter-spacing: -.2px; }
.a-dd { margin: 2px 9px 0 auto; color: #666; }
.refresh { width: 34px; height: 30px; border: 1px solid #d9d9d9; display: flex; align-items: center; justify-content: center; }
.search { width: 202px; height: 30px; border: 1px solid #d9d9d9; margin-left: 12px; display: flex; align-items: center; padding-left: 14px; color: #6d6d6d; }
.search span { margin-left: 13px; letter-spacing: -.4px; }
.d-tools { height: 31px; margin-top: 7px; background: #f5f6f7; border-bottom: 1px solid #e8e9ea; display: flex; align-items: center; color: #1e395b; padding-left: 18px; letter-spacing: -.2px; }
.org { width: 48px; letter-spacing: -.3px; }
.tri { border: 4px solid transparent; border-top: 4px solid #1e395b; border-bottom: 0; margin-left: 4px; }
.nf { margin-left: 31px; width: 437px; }
.t1 + .tri { margin-left: 11px; }
.t2 { margin-left: 21px; }
.t3 { margin-left: 20px; }
.q { font: bold 12px "Open Sans", sans-serif; fill: #fff; }
.d-main { height: 292px; display: flex; }
.side-list { width: 140px; }
.it { width: 139px; height: 24px; display: flex; align-items: center; padding-left: 32px; }
.it span { margin-left: 5px; flex: 1; padding-bottom: 2px; }
.it .nar { letter-spacing: -.25px; }
.pin { margin-right: 2px; }
.top { padding-left: 24px; margin-top: 8px; }
.act { background: #d9d9d9; }
.d-scroll { width: 15px; background: #f0f0f0; display: flex; flex-direction: column; align-items: center; padding: 7px 0 6px; }
.d-thumb { width: 15px; height: 226px; background: #cdcdcd; margin-top: 30px; }
.d-scroll svg:last-child { margin-top: auto; }
.files { border-left: 1px solid #f0f0f0; margin-left: 3px; padding: 6px 0 0 16px; display: flex; gap: 17px; }
.file { width: 105px; height: 116px; border: 1px solid transparent; display: flex; flex-direction: column; align-items: center; padding-top: 9px; }
.file svg { margin-right: 6px; }
.file span { line-height: 16px; margin-top: 4px; letter-spacing: -.25px; margin-left: 1px; }
.picked { background: #cce8ff; border-color: #99d1ff; }
.d-foot { flex: 1; background: #f0f0f0; position: relative; }
.f1 { display: flex; align-items: center; padding: 9px 0 0; }
.f1 > span { width: 184px; text-align: right; letter-spacing: -.15px; padding-bottom: 2px; }
.fname { width: 261px; height: 24px; margin-left: 5px; border: 1px solid #7a7a7a; background: #fff; display: flex; align-items: center; justify-content: flex-end; padding-right: 3px; }
.ftype { width: 188px; height: 23px; margin-left: 12px; border: 1px solid #adadad; background: #e1e1e1; display: flex; align-items: center; justify-content: space-between; padding: 0 3px; }
.ftype span { letter-spacing: -.25px; padding-bottom: 1px; }
.f2 { display: flex; gap: 14px; padding: 6px 0 0 463px; letter-spacing: -.15px; }
.btn { width: 86px; height: 24px; border: 1px solid #adadad; background: #e1e1e1; text-align: center; line-height: 22px; }
.pri { border: 2px solid #0078d7; line-height: 20px; }
.grip { position: absolute; right: 3px; bottom: 2px; }

/* taskbar */
.taskbar { height: 40px; background: linear-gradient(90deg, #021a22, #03151d 45%, #020b17 60%, #020a15); display: flex; color: #fff; font-size: 12px; }
.tb { width: 49px; height: 40px; display: flex; align-items: center; justify-content: center; flex: none; }
.tb.st { width: 48px; } .tb.se { width: 50px; padding-right: 2px; }
.ul { background: linear-gradient(#76b9ed, #76b9ed) 5px 38px / 40px 2px no-repeat; }
.cur { background: linear-gradient(#76b9ed, #76b9ed) 0 38px / 48px 2px no-repeat, linear-gradient(#35464d, #35464d) 0 0 / 48px 40px no-repeat; }
.wd { font: bold 10px "Liberation Sans", sans-serif; fill: #fff; }
.sk { font: bold 15px "Open Sans", sans-serif; fill: #fff; }
.tm { font: bold 12px "Open Sans", sans-serif; fill: #fff; }
.tn { font: 12px "Open Sans", sans-serif; fill: #fff; }
.tray { display: flex; align-items: center; flex: 1; padding-left: 162px; }
.temp { margin-left: 8px; width: 38px; font-size: 14px; letter-spacing: -.4px; }
.wth { width: 86px; font-size: 14px; letter-spacing: -.3px; }
.y1 { margin-left: 17px; } .y2 { margin-left: 13px; } .y3 { margin-left: 10px; } .y4 { margin-left: 7px; }
.eng { margin-left: 10px; width: 24px; letter-spacing: -.4px; padding-bottom: 1px; }
.clock { width: 64px; margin-left: 9px; display: flex; flex-direction: column; align-items: center; line-height: 18px; }
.clock span { letter-spacing: -.4px; }
.y5 { margin-left: 15px; }
.peek { width: 1px; height: 40px; background: #5a6068; margin-left: 20px; }
```
